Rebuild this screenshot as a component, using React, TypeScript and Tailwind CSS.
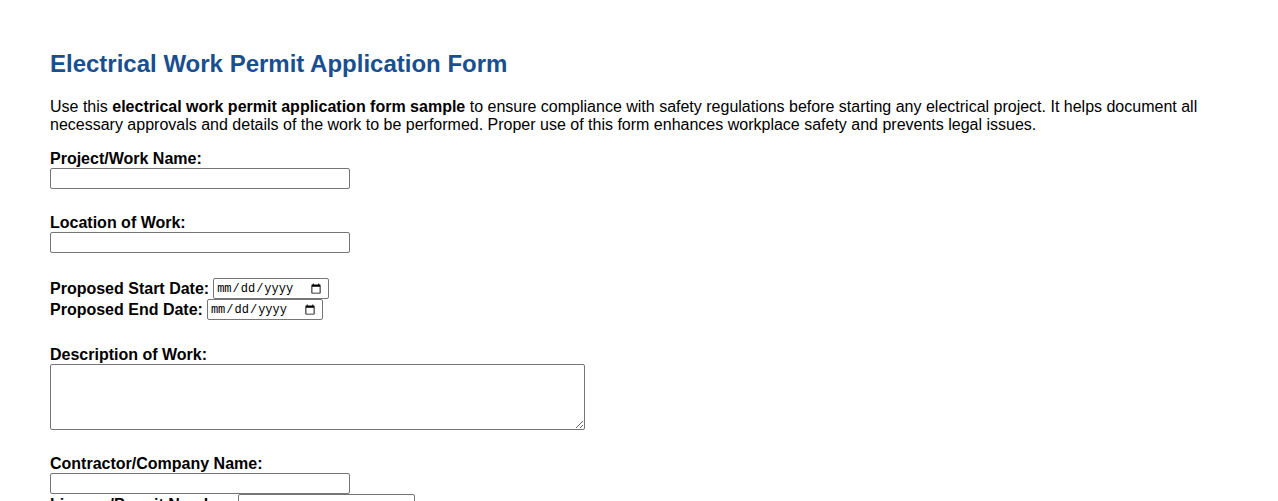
import React from 'react';

const inputCls =
  'block h-[21px] border border-[#767676] rounded-[2px] bg-white px-[2px] text-[13px]';

const dateCls =
  "h-[21px] w-[116px] border border-[#767676] rounded-[2px] bg-white pl-[2px] pr-[4px] font-['Liberation_Mono',monospace] text-[12px] text-black";

export default function App() {
  return (
    <div className="min-h-screen bg-white px-[50px] pt-[50px] font-['Liberation_Sans',Arial,sans-serif] text-[16px] leading-[18px] text-black">
      <h1 className="text-[24px] leading-[28px] font-bold text-[#1a4f8f]">
        Electrical Work Permit Application Form
      </h1>

      <p className="mt-[20px]">
        Use this <strong>electrical work permit application form sample</strong> to ensure compliance
        with safety regulations before starting any electrical project. It helps document all
        necessary approvals and details of the work to be performed. Proper use of this form
        enhances workplace safety and prevents legal issues.
      </p>

      <form className="mt-[16px] flex flex-col">
        <label className="font-bold" htmlFor="project">Project/Work Name:</label>
        <input id="project" type="text" className={`${inputCls} w-[300px]`} />

        <label className="mt-[25px] font-bold" htmlFor="location">Location of Work:</label>
        <input id="location" type="text" className={`${inputCls} w-[300px]`} />

        <div className="mt-[25px] flex h-[21px] items-center gap-[4px]">
          <label className="font-bold" htmlFor="start">Proposed Start Date:</label>
          <input id="start" type="date" className={dateCls} />
        </div>
        <div className="flex h-[21px] items-center gap-[4px]">
          <label className="font-bold" htmlFor="end">Proposed End Date:</label>
          <input id="end" type="date" className={dateCls} />
        </div>

        <label className="mt-[26px] font-bold" htmlFor="desc">Description of Work:</label>
        <textarea
          id="desc"
          className="block h-[66px] w-[535px] border border-[#767676] rounded-[2px] bg-white"
        />

        <label className="mt-[25px] font-bold" htmlFor="contractor">Contractor/Company Name:</label>
        <input id="contractor" type="text" className={`${inputCls} w-[300px]`} />

        <div className="flex h-[21px] items-center gap-[4px]">
          <label className="font-bold" htmlFor="license">License/Permit Number:</label>
          <input id="license" type="text" className={`${inputCls} w-[177px]`} />
        </div>
      </form>
    </div>
  );
}
